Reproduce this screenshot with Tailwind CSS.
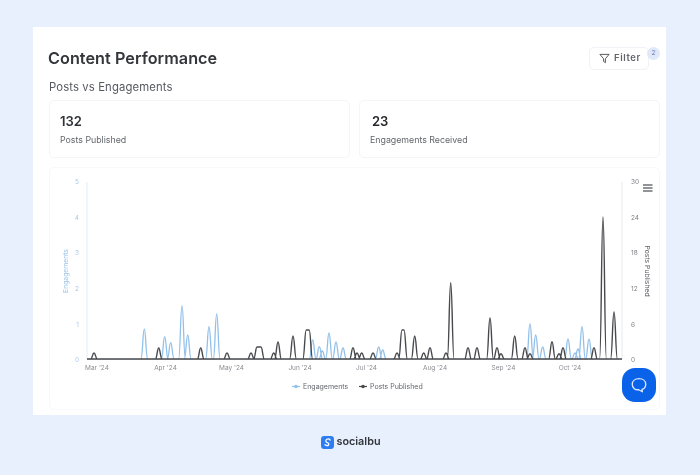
<!DOCTYPE html>
<html>
<head>
    <title>Content Performance</title>
    <script src="https://cdn.jsdelivr.net/npm/@tailwindcss/browser@4"></script>
</head>
<body class="w-[700px] h-[475px] overflow-hidden bg-[#e9f0fd] font-['Inter',sans-serif] text-[#2f3237]">

    <div class="pt-[27px] px-[33px] blur-[0.3px]">
        <div class="relative w-[633px] h-[388px] bg-white px-[16px]">

            <!-- Header -->
            <div class="flex items-start justify-between h-[62px] pt-[20px] pr-[1px]">
                <h1 class="-ml-[1px] text-[16.2px] leading-[22px] font-semibold tracking-[0.05px] text-[#33363b]">Content Performance</h1>
                <div class="relative">
                    <button class="flex items-center gap-[4px] w-[60px] h-[23px] pl-[9px] rounded-[5px] border border-[#f1f2f5] text-[9.5px] font-semibold tracking-[0.6px] text-[#62656b]">
                        <svg width="11" height="11" viewBox="0 0 24 24" fill="none" stroke="#4b4e54" stroke-width="2" stroke-linejoin="round"><path d="M2 3h20l-8 9.500V21l-4-2.500v-6z"/></svg>
                        Filter
                    </button>
                    <span class="absolute top-0 -right-[11px] flex items-center justify-center w-[13px] h-[13px] rounded-full bg-[#dfe9fa] text-[6.5px] text-[#5b78a8]">2</span>
                </div>
            </div>

            <h2 class="text-[11.3px] leading-[14px] font-normal tracking-[0.12px] text-[#555960] -mt-[9px] mb-[6px]">Posts vs Engagements</h2>

            <!-- Stat cards -->
            <div class="grid grid-cols-2 gap-[9px] w-[611px]">
                <div class="h-[58px] rounded-[5px] border border-[#f4f5f7] pl-[10px] pt-[11px]">
                    <div class="text-[13px] leading-[18px] font-semibold text-[#2f3237]">132</div>
                    <div class="mt-[4px] text-[8.8px] leading-[12px] text-[#62656b]">Posts Published</div>
                </div>
                <div class="h-[58px] rounded-[5px] border border-[#f4f5f7] pl-[10px] pt-[11px]">
                    <div class="pl-[2px] text-[13px] leading-[18px] font-semibold text-[#25272b]">23</div>
                    <div class="mt-[4px] text-[8.8px] leading-[12px] text-[#62656b]">Engagements Received</div>
                </div>
            </div>

            <!-- Chart -->
            <div class="mt-[9px] w-[611px] h-[243px] rounded-[5px] border border-[#f7f8fa]">
                <svg id="chart" width="611" height="243" viewBox="49 167 611 243" class="block -m-px font-['Inter',sans-serif]">
                    <line x1="87" y1="182" x2="87" y2="359" stroke="#e3edf8"/>
                    <line x1="622" y1="182" x2="622" y2="359" stroke="#e8e9ec"/>
                    <line x1="87" y1="359.5" x2="622" y2="359.5" stroke="#e3e6ea"/>

                    <g fill="#a9c9e8" font-size="6.5" text-anchor="end">
                        <text x="79" y="184">5</text>
                        <text x="79" y="220">4</text>
                        <text x="79" y="255">3</text>
                        <text x="79" y="291">2</text>
                        <text x="79" y="327">1</text>
                        <text x="79" y="362">0</text>
                    </g>
                    <text transform="translate(68 271) rotate(-90)" fill="#9cc4e8" font-size="6.8" text-anchor="middle">Engagements</text>

                    <g fill="#7c7f85" font-size="6.5">
                        <text x="631" y="184">30</text>
                        <text x="631" y="220">24</text>
                        <text x="631" y="255">18</text>
                        <text x="631" y="291">12</text>
                        <text x="631" y="327">6</text>
                        <text x="631" y="362">0</text>
                    </g>
                    <text transform="translate(644.5 271) rotate(90)" fill="#5f6268" font-size="6.8" text-anchor="middle">Posts Published</text>

                    <g fill="#8a8d93" font-size="6.5" text-anchor="middle">
                        <text x="97" y="370">Mar '24</text>
                        <text x="165.5" y="370">Apr '24</text>
                        <text x="231.5" y="370">May '24</text>
                        <text x="300" y="370">Jun '24</text>
                        <text x="366.5" y="370">Jul '24</text>
                        <text x="435" y="370">Aug '24</text>
                        <text x="503.5" y="370">Sep '24</text>
                        <text x="570" y="370">Oct '24</text>
                    </g>

                    <path id="blue" fill="none" stroke="#93c0ea" stroke-width="1.3"/>
                    <path id="black" fill="none" stroke="#47494d" stroke-width="1.4"/>

                    <!-- Hamburger -->
                    <g stroke="#55585e" stroke-width="1.3">
                        <line x1="643" y1="185" x2="652.5" y2="185"/>
                        <line x1="643" y1="188" x2="652.5" y2="188"/>
                        <line x1="643" y1="191" x2="652.5" y2="191"/>
                    </g>

                    <!-- Legend -->
                    <line x1="292" y1="386.5" x2="300" y2="386.5" stroke="#93c0ea" stroke-width="1.2"/>
                    <circle cx="296" cy="386.5" r="1.8" fill="#93c0ea"/>
                    <text x="303" y="389" fill="#62656b" font-size="7">Engagements</text>
                    <line x1="359" y1="386.5" x2="367" y2="386.5" stroke="#47494d" stroke-width="1.2"/>
                    <circle cx="363" cy="386.5" r="1.8" fill="#47494d"/>
                    <text x="370" y="389" fill="#62656b" font-size="7">Posts Published</text>
                </svg>
            </div>

            <!-- Chat bubble -->
            <button class="absolute left-[589px] top-[341px] flex items-center justify-center w-[34px] h-[34px] rounded-[13px] bg-[#0a62e8]">
                <svg width="18" height="18" viewBox="0 0 24 24" fill="none" stroke="#dbe8ff" stroke-width="1.8" stroke-linejoin="round"><path d="M12 3.500c5.200 0 9 3 9 7.500 0 3.500-2 6-5 7l.5 3-5-2.700C6.500 18.800 3 15.500 3 11c0-4.500 3.800-7.500 9-7.500z"/></svg>
            </button>
        </div>

        <!-- Footer logo -->
        <div class="flex items-center justify-center gap-[3px] mt-[20px] pl-[1px]">
            <svg width="13" height="13" viewBox="0 0 24 24">
                <rect width="24" height="24" rx="6" fill="#2f7bf0"/>
                <path d="M17 7.500c-1.500-2-4-2.500-6-1.500-3 1.500-2.500 5 0 6s4.500 2 3 4.500c-1.500 1.500-4 1.500-6.500-.5" fill="none" stroke="#fff" stroke-width="2.400" stroke-linecap="round"/>
            </svg>
            <span class="text-[10.8px] leading-[14px] font-semibold text-[#33363b]">socialbu</span>
        </div>
    </div>

    <script>
        // peaks as [x, y] in page pixels, read off the chart; a third value means a flat top
        const posts = [[94,353],[158.7,348],[200.7,348],[227,353],[251,353],[259,347,2],[278,342],[273.7,353],[293,336],[307.7,330,1.5],
            [353,347.7],[357,353],[361.7,353],[373,353],[397,353],[403,330,1],[414.7,336],[423.7,353],[430,347.7],[446,353],[450.7,282.7],
            [468,347.7],[477,347.7],[490,318],[497,347.7],[501,353.7],[514.7,336],[525,347.7],[530,353.7],[552,341.7],[559,353.7],
            [563,347.7],[594,347.7],[603,217],[614,312]];
        const engagements = [[144.3,329],[164.7,336.7],[170.7,342.7],[182,305.7],[187.7,335],[209,326.7],[216.7,314],[312.7,340],[319.3,346.7],
            [322.3,351],[329,333],[336,342],[343,348],[378.7,347],[382.7,350],[530,324],[535.7,335],[542.7,347],[568,339],[575,353],[578,349],
            [582,326.7],[589,339]];

        function bumps(peaks, withBase) {
            let d = withBase ? "M87 359H622" : "";
            for (const [x, y, flat = 0] of peaks) {
                const l = x - flat, r = x + flat, w = 3.4;
                d += `M${l - w} 359C${l - w * 0.5} 359 ${l - w * 0.45} ${y} ${l} ${y}`;
                d += `L${r} ${y}C${r + w * 0.45} ${y} ${r + w * 0.5} 359 ${r + w} 359`;
            }
            return d;
        }

        document.getElementById("black").setAttribute("d", bumps(posts, true));
        document.getElementById("blue").setAttribute("d", bumps(engagements, false));
    </script>
</body>
</html>
